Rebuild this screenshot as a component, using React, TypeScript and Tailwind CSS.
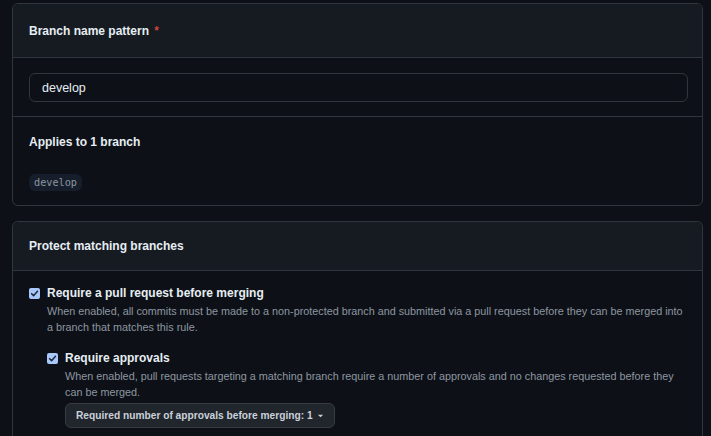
import { useState } from 'react';

const Check = ({ checked, onChange }: { checked: boolean; onChange: () => void }) => (
  <button
    onClick={onChange}
    className="mt-[5px] flex h-[11px] w-[11px] shrink-0 items-center justify-center rounded-[2px] bg-[#a8c7fa]"
    aria-checked={checked}
    role="checkbox"
  >
    {checked && (
      <svg width="9" height="9" viewBox="0 0 10 10" fill="none">
        <path d="M1.8 5.2 L4 7.4 L8.3 2.6" stroke="#1f2a3a" strokeWidth="1.7" strokeLinecap="round" strokeLinejoin="round" />
      </svg>
    )}
  </button>
);

export default function App() {
  const [pattern, setPattern] = useState('develop');
  const [requirePr, setRequirePr] = useState(true);
  const [requireApprovals, setRequireApprovals] = useState(true);

  return (
    <div
      className="min-h-[436px] bg-[#0d1117] pl-3 pr-2 pt-[3px] text-[#e6edf3]"
      style={{ fontFamily: '"Liberation Sans", Arial, sans-serif' }}
    >
      {/* Branch name pattern */}
      <div className="overflow-hidden rounded-md border border-[#30363d]">
        <div className="flex h-[54px] items-center border-b border-[#30363d] bg-[#161b22] px-4">
          <span className="text-[12px] font-bold">Branch name pattern</span>
          <span className="ml-[5px] text-[13px] text-[#f85149]">*</span>
        </div>
        <div className="border-b border-[#30363d] pl-4 pr-[14px] pt-[15px] pb-[14px]">
          <input
            value={pattern}
            onChange={(e) => setPattern(e.target.value)}
            className="h-[29px] w-full rounded-md border border-[#30363d] bg-[#0d1117] px-3 text-[12.5px] text-[#e6edf3] outline-none"
          />
        </div>
        <div className="px-4 pt-[15px] pb-[14px]">
          <div className="text-[12px] font-bold leading-[20px]">Applies to 1 branch</div>
          <div className="mt-[22px] flex">
            <code
              className="h-[17px] rounded-md bg-[#161e2b] px-[5px] text-[10.2px] leading-[17px] text-[#8d96a0]"
              style={{ fontFamily: '"DejaVu Sans Mono", "Liberation Mono", monospace' }}
            >
              develop
            </code>
          </div>
        </div>
      </div>

      {/* Protect matching branches */}
      <div className="mt-[15px] rounded-t-md border border-b-0 border-[#30363d]">
        <div className="flex h-[49px] items-center rounded-t-md border-b border-[#30363d] bg-[#161b22] px-4">
          <span className="text-[12px] font-bold">Protect matching branches</span>
        </div>
        <div className="pl-4 pr-[14px] pt-[12px] pb-4">
          <div className="flex gap-[7px]">
            <Check checked={requirePr} onChange={() => setRequirePr(!requirePr)} />
            <div>
              <div className="text-[12px] font-bold leading-[20px]">Require a pull request before merging</div>
              <p className="text-[10.8px] leading-[16px] text-[#8d96a0]">
                When enabled, all commits must be made to a non-protected branch and submitted via a pull request before they can be merged into a branch that matches this rule.
              </p>
              <div className="mt-[13px] flex gap-[7px]">
                <Check checked={requireApprovals} onChange={() => setRequireApprovals(!requireApprovals)} />
                <div>
                  <div className="text-[12px] font-bold leading-[20px]">Require approvals</div>
                  <p className="pr-[10px] text-[10.8px] leading-[16px] text-[#8d96a0]">
                    When enabled, pull requests targeting a matching branch require a number of approvals and no changes requested before they can be merged.
                  </p>
                  <button className="mt-[3px] flex h-[25px] items-center gap-[4px] rounded-md border border-[#363b42] bg-[#21262d] px-[10px] text-[10.2px] font-bold text-[#c9d1d9]">
                    Required number of approvals before merging: 1
                    <svg width="7" height="7" viewBox="0 0 8 8">
                      <path d="M1 3 L4 6 L7 3 Z" fill="#c9d1d9" />
                    </svg>
                  </button>
                </div>
              </div>
            </div>
          </div>
        </div>
      </div>
    </div>
  );
}
